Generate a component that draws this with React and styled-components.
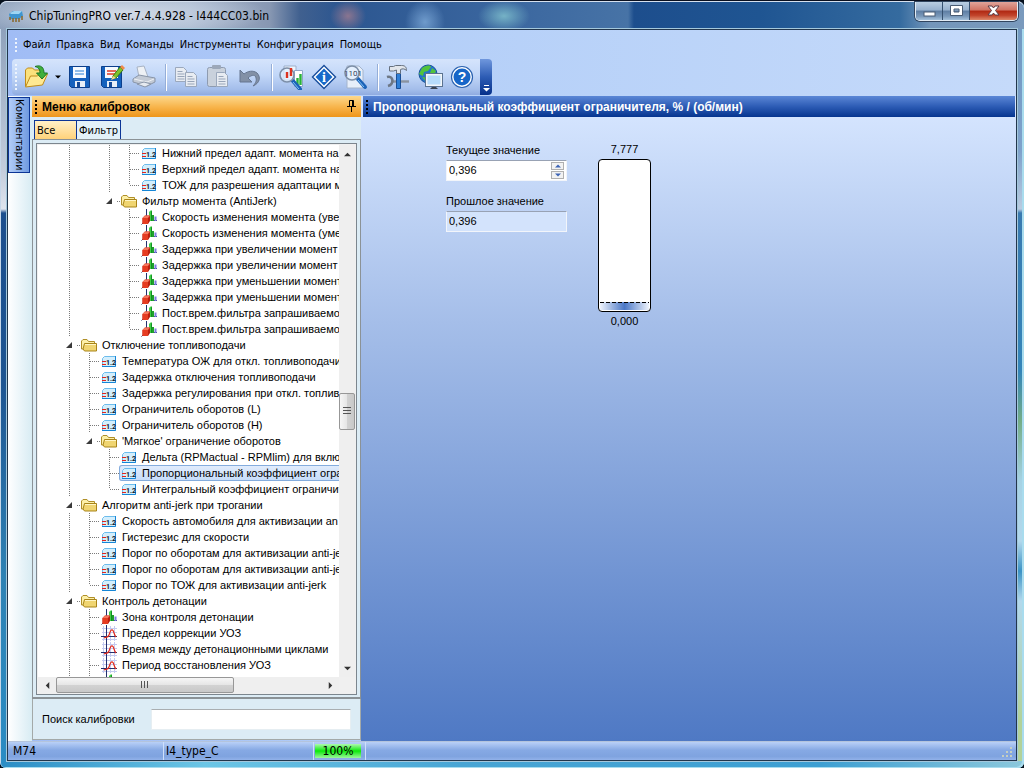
import React, { useState } from "react";
import styled, { createGlobalStyle, css } from "styled-components";

const GlobalStyle = createGlobalStyle`
  * {
    box-sizing: border-box;
  }

  body {
    margin: 0;
    background: #06101c;
    color: #000;
    font-family: "Liberation Sans", Arial, sans-serif;
    font-size: 11px;
  }

  button,
  input {
    font: inherit;
    color: inherit;
    margin: 0;
    padding: 0;
    border: 0;
    background: none;
    border-radius: 0;
  }

  input:focus {
    outline: none;
  }
`;

const tahoma = css`
  font-family: "DejaVu Sans Condensed", Tahoma, sans-serif;
`;

/* window frame */

const Window = styled.div`
  height: 100vh;
  min-height: 500px;
  display: flex;
  flex-direction: column;
  padding: 0 7px 7px;
  border-top: 1px solid #0a1020;
  border-radius: 7px 7px 6px 6px;
  box-shadow: inset 1px 1px 0 #c5d6e8, inset -2px -1px 0 #a9dcee;
  background: linear-gradient(90deg, #2a8cc4, #6cc6e6 20%, #48a5d4 45%, #3d9fd2 80%, #8cc8dc) bottom / 100% 7px no-repeat,
    linear-gradient(#8499b5, #c4cddc 170px, #dfe5ee 208px, #1d4f8e 212px, #1e5592 50%, #2f82b4 75%, #2a8cc4) left / 8px 100% no-repeat,
    linear-gradient(#6f97c0, #7fa2cb 150px, #b9cbe0 208px, #3a7ab0 212px, #3585b9 370px, #74ad87 420px, #a6d2e4 480px, #b3d8ec 540px, #3c93c5 570px, #b3d8ec 600px, #b2d29a 720px) right / 8px 100% no-repeat,
    #2b6aa5;
`;

const TitleBar = styled.header`
  display: flex;
  flex: none;
  height: 28px;
  margin: 0 -7px;
  padding: 0 6px 0 8px;
  border-radius: 7px 7px 0 0;
  border-top: 1px solid #d5e0ee;
  background: radial-gradient(ellipse 26px 16px at 504px 14px, #75b2c6, transparent),
    radial-gradient(ellipse 18px 16px at 348px 14px, #8a7590, transparent),
    radial-gradient(ellipse 20px 22px at 425px 20px, #6f9bcc, transparent),
    radial-gradient(ellipse 150px 24px at 120px 12px, #d5dde9, rgba(200, 212, 228, 0.5) 60%, transparent),
    linear-gradient(90deg, #8da0bb, #a9b8ce 190px, #8797b2 270px, #40608f 300px, #2c5690 340px, #3a669f 500px, #4773a6 628px, #1d4e8d 634px, #1f5592 760px, #356b9f 900px, #7496ba 930px, #7a9abd);
`;

const AppTitle = styled.h1`
  ${tahoma}
  flex: 1;
  margin: 0;
  display: flex;
  align-items: center;
  gap: 5px;
  font-size: 12px;
  font-weight: 400;
`;

const Caption = styled.div`
  display: flex;
  height: 19px;
  border: 1px solid #e2ebf4;
  border-top: 0;
  border-radius: 0 0 5px 5px;
  overflow: hidden;
  box-shadow: 0 0 0 1px #31455f;
`;

const CaptionButton = styled.button`
  display: grid;
  place-items: center;
  width: ${({ $close }) => ($close ? 47 : 27)}px;
  border-right: ${({ $close }) => ($close ? 0 : "1px solid #35506f")};
  background: ${({ $close }) =>
    $close
      ? "linear-gradient(#e0a49a, #cf7262 45%, #b02812 50%, #c2452c 75%, #dd8a6c)"
      : "linear-gradient(#b9cde2, #96b0cd 45%, #5d7da3 50%, #7b9abb 80%, #a4c0da)"};
`;

const Client = styled.div`
  flex: 1;
  min-height: 0;
  display: flex;
  flex-direction: column;
  border: 1px solid #22364c;
  outline: 1px solid #a4c8dc;
  background: linear-gradient(90deg, #a0bcf5, #b4cff8 40%, #c5dafa);
`;

/* menu and tool bars */

const Grip = styled.span`
  flex: none;
  width: 2px;
  height: ${({ $height }) => $height || 14}px;
  background: repeating-linear-gradient(${({ $color }) => $color || "#eef4fd"} 0 2px, transparent 2px 4px);
`;

const MenuBar = styled.nav`
  ${tahoma}
  display: flex;
  align-items: center;
  gap: 6px;
  flex: none;
  height: 29px;
  padding-left: 7px;

  button {
    white-space: nowrap;
  }
`;

const ToolRow = styled.div`
  display: flex;
  flex: none;
  height: 37px;
  padding: 0 0 1px 4px;
`;

const ToolBar = styled.div`
  display: flex;
  align-items: center;
  height: 36px;
  padding: 0 2px 0 3px;
  border-radius: 4px 0 0 4px;
  background: linear-gradient(#d5e4fc, #c2d7f8 45%, #a3bdea 85%, #8fabe0);

  ${Grip} {
    margin-right: 3px;
  }
`;

const ToolButton = styled.button`
  display: grid;
  place-items: center;
  width: ${({ $narrow }) => ($narrow ? 12 : 32)}px;
  height: 32px;
`;

const ToolDivider = styled.span`
  width: 2px;
  height: 27px;
  margin: 0 3px 0 5px;
  border-left: 1px solid #95aed8;
  border-right: 1px solid #fff;
`;

const Overflow = styled.button`
  display: flex;
  flex-direction: column;
  align-items: center;
  justify-content: flex-end;
  width: 12px;
  padding-bottom: 3px;
  border-radius: 0 4px 4px 0;
  background: linear-gradient(#6f97dd, #2d5cb4 50%, #06308a);
`;

/* work area */

const Work = styled.div`
  flex: 1;
  min-height: 0;
  display: flex;
`;

const SideRail = styled.aside`
  flex: none;
  width: 24px;
  padding-top: 1px;
  background: linear-gradient(90deg, #fff, #f3f9fc 30%, #d8ecf3);
`;

const RailTab = styled.button`
  ${tahoma}
  writing-mode: vertical-rl;
  width: 22px;
  height: 76px;
  border: 1px solid #0c3596;
  background: linear-gradient(90deg, #b3cdf7, #6f9ae0);
  text-align: left;
  padding-top: 1px;
`;

const MenuPanel = styled.section`
  flex: none;
  width: 329px;
  margin-bottom: 1px;
  display: flex;
  flex-direction: column;
  background: #dcecf5;
`;

const PanelHead = styled.div`
  display: flex;
  align-items: center;
  flex: none;
  height: 21px;
  padding: 0 5px 0 3px;
  background: ${({ $blue }) =>
    $blue ? "linear-gradient(#5b87d6, #2d5cb5 50%, #05348f)" : "linear-gradient(#fcd88d, #f8b64e 50%, #ee951a)"};
  color: ${({ $blue }) => ($blue ? "#fff" : "#000")};

  h2 {
    flex: 1;
    margin: 0 0 0 5px;
    font-size: 12px;
    font-weight: 700;
    line-height: 20px;
    white-space: nowrap;
  }
`;

const Tabs = styled.div`
  ${tahoma}
  display: flex;
  flex: none;
  height: 22px;
  padding: 3px 0 0 2px;
`;

const Tab = styled.button`
  width: ${({ $active }) => ($active ? 42 : 45)}px;
  padding-left: 2px;
  border: 1px solid #0c3596;
  border-right-width: ${({ $active }) => ($active ? 0 : 1)}px;
  border-bottom: 0;
  background: ${({ $active }) => ($active ? "linear-gradient(#fff0c8, #ffd27a)" : "#e3f1f8")};
  text-align: left;
`;

const TabPage = styled.div`
  flex: 1;
  min-height: 0;
  display: flex;
  border: 1px solid #8b9296;
  border-bottom-width: 2px;
  padding: 3px 3px 2px;
`;

const TreeBox = styled.div`
  flex: 1;
  min-width: 0;
  display: grid;
  grid-template-columns: minmax(0, 1fr) 16px;
  grid-template-rows: minmax(0, 1fr) 16px;
  padding: 1px;
  border: 1px solid #7c868e;
  background: #f0f0f0;
`;

const Tree = styled.ul`
  margin: 0;
  padding: 0 0 0 22px;
  list-style: none;
  background: #fff;
  overflow: hidden;
`;

const Row = styled.li`
  display: flex;
  height: 16px;
  line-height: 16px;
  white-space: nowrap;
`;

const Label = styled.span`
  flex: ${({ $selected }) => ($selected ? "1" : "none")};
  display: flex;
  ${({ $selected }) =>
    $selected &&
    css`
      margin-left: -1px;
      border-radius: 3px 0 0 3px;
      background: linear-gradient(#e3edfc, #c5dcfa);
      box-shadow: inset 0 0 0 1px #84acdd;

      svg {
        margin-left: 1px;
      }
    `}

  svg {
    flex: none;
    margin-right: 2px;
  }
`;

const Cell = styled.span`
  flex: none;
  display: flex;
  width: 20px;
  height: 16px;
`;

const ScrollBar = styled.div`
  display: flex;
  flex-direction: ${({ $vertical }) => ($vertical ? "column" : "row")};
  background: #efefef;

  button {
    display: grid;
    place-items: center;
    width: ${({ $vertical }) => ($vertical ? 16 : 18)}px;
    height: ${({ $vertical }) => ($vertical ? 18 : 16)}px;
  }
`;

const Track = styled.div`
  flex: ${({ $grow }) => $grow} 1 0;
`;

const Thumb = styled.div`
  flex: ${({ $grow }) => $grow} 1 0;
  display: grid;
  place-items: center;
  border: 1px solid #979797;
  border-radius: 2px;
  background: linear-gradient(${({ $vertical }) => ($vertical ? "90deg" : "180deg")}, #f6f6f6, #e6e6e6 48%, #d2d2d2 52%, #c8c8c8);
`;

const Search = styled.div`
  display: flex;
  align-items: center;
  flex: none;
  height: 41px;
  padding: 0 9px;
  border: 1px solid #a3a9a8;
  border-top: 0;

  label {
    width: 109px;
  }

  input {
    flex: 1;
    min-width: 0;
    height: 21px;
    border: 1px solid #e6eef2;
    border-top-color: #a9aeb1;
    background: #fff;
  }
`;

const Main = styled.main`
  flex: 1;
  min-width: 0;
  margin-right: 1px;
  display: flex;
  flex-direction: column;
`;

const WorkBack = styled.div`
  flex: 1;
  min-width: 0;
  display: flex;
  padding-left: 2px;
  background: linear-gradient(#d4e4fe 20px, #a5bee9 35%, #4f79c4);
`;

const Editor = styled.div`
  display: flex;
  gap: 31px;
  padding: 23px 0 0 83px;
`;

const Fields = styled.div`
  width: 121px;
  display: flex;
  flex-direction: column;
`;

const FieldLabel = styled.label`
  line-height: 20px;
`;

const FieldBox = styled.div`
  display: flex;
  height: 21px;
  margin-bottom: 10px;
  padding: 1px 2px 0;
  border: 1px solid #f2f5fa;
  border-top-color: #98a2b4;
  background: ${({ $readOnly }) => ($readOnly ? "#d3e3fc" : "#fff")};

  input {
    flex: 1;
    min-width: 0;
    height: 16px;
  }
`;

const Spinner = styled.span`
  flex: none;
  display: flex;
  flex-direction: column;
  gap: 1px;

  button {
    display: grid;
    place-items: center;
    width: 13px;
    height: 8px;
    border: 1px solid #b0b0b0;
    background: #f2f2f2;
  }
`;

const Gauge = styled.div`
  width: 53px;
  display: flex;
  flex-direction: column;
  line-height: 19px;
  text-align: center;
`;

const GaugeBox = styled.div`
  height: 153px;
  display: flex;
  flex-direction: column;
  justify-content: flex-end;
  padding: 1px;
  border: 1px solid #000;
  border-radius: 4px;
  background: #fff;
`;

const GaugeFill = styled.div`
  background: repeating-linear-gradient(90deg, #000 0 4px, transparent 4px 6px) top / 100% 1px no-repeat,
    linear-gradient(90deg, #eef3fc, #4a77c6 50%, #eef3fc);
`;

/* status bar */

const StatusBar = styled.footer`
  ${tahoma}
  display: flex;
  align-items: center;
  flex: none;
  height: 19px;
  border-top: 1px solid #b4c4dc;
  background: linear-gradient(#b9d0f7, #86a9e4 45%, #7fa3df 80%, #92b2ea);
  font-size: 12px;
`;

const StatusCell = styled.div`
  flex: none;
  width: ${({ $width }) => $width}px;
  height: 18px;
  line-height: 19px;
  padding-left: ${({ $pad }) => $pad}px;
  border-right: 1px solid #cfe0fb;
`;

const Progress = styled.div`
  flex: none;
  width: 46px;
  height: 14px;
  margin: 0 4px 0 1px;
  line-height: 14px;
  text-align: center;
  background: linear-gradient(#aefaae, #0be80b 50%, #9df79d);
`;

const StatusFill = styled.div`
  flex: 1;
  height: 18px;
  display: flex;
  justify-content: flex-end;
  align-items: flex-end;
  padding: 0 3px 2px 0;
  border-left: 1px solid #cfe0fb;
`;

/* icons */

const ChipIcon = () => (
  <svg width="16" height="16" viewBox="0 0 16 16">
    <path d="M1 6l4-3h9l1 5-4 3H2z" fill="#3f95cf" />
    <path d="M2 5l4-2h8l-3 3H3z" fill="#9fd5f2" />
    <path d="M2 9v3M5 10v4M8 10v4M11 10v4M14 8v4" stroke="#8a6c34" strokeWidth="1.6" />
  </svg>
);

const OpenIcon = () => (
  <svg width="26" height="26" viewBox="0 0 26 26">
    <path d="M2.500 22V6l2-2h5l2 2h7v5" fill="#fbe17c" stroke="#c08c1a" />
    <path d="M2.500 23l5-11h7l2-2h8l-5 11z" fill="#ffe992" stroke="#c08c1a" />
    <path d="M12 2.500c6-2 9 1 9 6.500h3.500L19 15l-5.500-6H17c0-3-1-5.500-5-6.500z" fill="#3faf3c" stroke="#1b7624" />
  </svg>
);

const SaveIcon = ({ edit }) => (
  <svg width="26" height="26" viewBox="0 0 26 26">
    <path d="M2.500 2.500h20v21h-18l-2-2z" fill="#1561bd" stroke="#0c3f8c" />
    <rect x="6" y="3" width="13" height="11" fill="#f6faff" />
    <path d="M8 7h9M8 10h9" stroke={edit ? "#e03a24" : "#6fa9e4"} strokeWidth="1.500" />
    <rect x="8" y="17" width="10" height="6" fill="#e8eef7" />
    <rect x="10" y="18" width="3" height="5" fill="#154a98" />
    {edit && (
      <>
        <path d="M14 12l7-9 3 3-7 8-4 1z" fill="#7ec32c" stroke="#3c7a12" />
        <path d="M21 3l2-2 3 3-2 2z" fill="#f08a4a" />
        <path d="M14 12l-2 4 5-2z" fill="#f7d58e" />
      </>
    )}
  </svg>
);

const PrintIcon = () => (
  <svg width="26" height="26" viewBox="0 0 26 26">
    <path d="M8 13L6 3l7-1 4 11z" fill="#eef1f5" stroke="#a8b3c4" />
    <path d="M2 15l6-4 16 3v4l-8 4-14-4z" fill="#c3cad5" stroke="#8995a8" />
    <path d="M3 15l13 3 7-3" fill="none" stroke="#eef1f5" />
    <path d="M6 20l8 3 6-3-7-2z" fill="#e6eaf0" stroke="#8995a8" />
  </svg>
);

const Page = ({ x, y }) => (
  <g transform={`translate(${x} ${y})`}>
    <path d="M0 0h8l3 3v11H0z" fill="#e8ecf2" stroke="#9ba8bc" />
    <path d="M2 4h5M2 6.500h7M2 9h7M2 11.500h7" stroke="#98a5b9" />
  </g>
);

const CopyIcon = () => (
  <svg width="26" height="26" viewBox="0 0 26 26">
    <Page x={2.5} y={3.5} />
    <Page x={12.5} y={8.5} />
  </svg>
);

const PasteIcon = () => (
  <svg width="26" height="26" viewBox="0 0 26 26">
    <rect x="2.500" y="3.500" width="18" height="19" rx="2" fill="#c9d1dc" stroke="#8e9bb0" />
    <rect x="7" y="1" width="9" height="4" rx="1" fill="#9ca8ba" />
    <Page x={11.5} y={8.5} />
  </svg>
);

const UndoIcon = () => (
  <svg width="26" height="26" viewBox="0 0 26 26">
    <path d="M3 6v12h12l-4-4c4-4 8-3 8 0 1 3-1 6-3 8 7-3 8-9 4-13-4-3-9-2-13 1z" fill="#8290a6" stroke="#65758f" />
  </svg>
);

const Lens = ({ x, y }) => (
  <g transform={`translate(${x} ${y})`}>
    <path d="M6 6l7 8" stroke="#1b62b8" strokeWidth="4" strokeLinecap="round" />
    <path d="M6 7l6 7" stroke="#7fc0f4" />
    <circle r="7" fill="#e3f1ff" fillOpacity="0.7" stroke="#7d8fa8" strokeWidth="1.600" />
  </g>
);

const ChartLensIcon = () => (
  <svg width="26" height="26" viewBox="0 0 26 26">
    <path d="M5 2h12v14H5z" fill="#eef4fc" stroke="#9db0cc" />
    <path d="M15.500 6.500h8v16h-8z" fill="#fff" stroke="#8ea6c8" />
    <path d="M18.500 21v-7M21.500 21V10" stroke="#27b238" strokeWidth="2.400" />
    <Lens x={8} y={11} />
    <path d="M8 14V8M12 12V4" stroke="#dc3320" strokeWidth="2.400" />
  </svg>
);

const InfoIcon = () => (
  <svg width="26" height="26" viewBox="0 0 26 26">
    <path d="M13 1.500L24.500 13 13 24.500 1.500 13z" fill="#fff" stroke="#174d9c" strokeWidth="1.400" />
    <path d="M13 4.500l8.500 8.500-8.500 8.500L4.500 13z" fill="#1769c9" />
    <text x="13" y="18" fontSize="14" fontWeight="700" fontFamily="Liberation Serif, serif" textAnchor="middle" fill="#fff">
      i
    </text>
  </svg>
);

const BinaryIcon = () => (
  <svg width="26" height="26" viewBox="0 0 26 26">
    <path d="M4 2h12l4 4v18H4z" fill="#e7effa" stroke="#a4b4cc" />
    <Lens x={9} y={9} />
    <text x="10" y="12" fontSize="8" fontFamily="Roboto, sans-serif" textAnchor="middle" fill="#34445c">
      1101
    </text>
  </svg>
);

const ToolsIcon = () => (
  <svg width="26" height="26" viewBox="0 0 26 26">
    <path d="M6 17.500h18" stroke="#8a93a0" strokeWidth="2.400" />
    <path d="M2 13c6-2 8 7 1 9" fill="none" stroke="#6d7785" strokeWidth="2.600" />
    <path d="M11.500 9.500h4v15h-4z" fill="#2f7fd6" stroke="#1a4f95" />
    <path d="M4.500 2.500h4l2-1h6c4 0 5 2 5 5-2-2-4-2-6-1v4h-4V6l-3 1h-4z" fill="#e2e6eb" stroke="#66707e" />
  </svg>
);

const NetIcon = () => (
  <svg width="26" height="26" viewBox="0 0 26 26">
    <circle cx="11" cy="10" r="9" fill="#2474cc" stroke="#195299" />
    <path d="M5 4c5-3 8-3 9-1l-3 4-4 1-1 4-4-2zM15 4l4 3-2 4-4-2zM5 13l6 1-2 4z" fill="#52c33c" />
    <rect x="9.500" y="10.500" width="15" height="11" fill="#b7dcfb" stroke="#f2f6fa" strokeWidth="2" />
    <rect x="8.500" y="9.500" width="17" height="13" fill="none" stroke="#5b7391" />
    <path d="M15 23h4l2 2h-8z" fill="#3c4654" />
  </svg>
);

const HelpIcon = () => (
  <svg width="26" height="26" viewBox="0 0 26 26">
    <circle cx="13" cy="13" r="10.500" fill="#fff" stroke="#2a62b0" strokeWidth="1.200" />
    <circle cx="13" cy="13" r="8.500" fill="#1766c8" />
    <text x="13" y="18" fontSize="14" fontWeight="700" fontFamily="Liberation Sans, sans-serif" textAnchor="middle" fill="#fff">
      ?
    </text>
  </svg>
);

const PinIcon = () => (
  <svg width="9" height="13" viewBox="0 0 9 13">
    <path d="M2.500 7V1.500h4V7M0 7.500h9M4.500 8v5M5.500 2v5" fill="none" stroke="#000" />
  </svg>
);

const Arrow = ({ dir, color = "#333", width = 7 }) => {
  const angle = { up: 180, down: 0, left: 90, right: -90 }[dir];
  return (
    <svg width={width} height={width} viewBox="0 0 8 8">
      <path d="M0 2h8L4 6z" fill={color} transform={`rotate(${angle} 4 4)`} />
    </svg>
  );
};

const NumberIcon = () => (
  <svg width="20" height="16" viewBox="0 0 20 16">
    <path d="M4.500 3.500h11v10h-13v-8z" fill="#d3eefc" stroke="#6cbcec" />
    <path d="M15.500 3v10.500H2" fill="none" stroke="#1686d6" />
    <path d="M2 8.500h4M2 11.500h4" stroke="#e3231c" />
    <text x="6" y="12" fontSize="7" fontWeight="700" fontFamily="Roboto, sans-serif" fill="#0c1c2c">
      1.2
    </text>
  </svg>
);

const BarsIcon = () => (
  <svg width="20" height="16" viewBox="0 0 20 16">
    <path d="M6.500 0v10M6 11L1.500 15.500M6 11.500h11" fill="none" stroke="#23306e" />
    <path d="M9 3l1.500-1.500H12V12H9z" fill="#3fd048" />
    <path d="M11 2.500l1-1V12h-1z" fill="#138f22" />
    <path d="M12 6h2v6h-2z" fill="#1fa12c" />
    <path d="M14.500 7.500h2V12h-2z" fill="#7d7ce0" />
    <path d="M2.500 9L5 6.500h5V12l-2 3H2.500z" fill="#b8200e" />
    <path d="M2.500 9H8v6H2.500z" fill="#e63c22" />
    <path d="M2.500 9L5 6.500h5L8 9z" fill="#f4765c" />
  </svg>
);

const CurveIcon = () => (
  <svg width="20" height="16" viewBox="0 0 20 16">
    <path d="M2 3.500h15M2 7.500h15M2 14.500h15M3.500 1v15M10.500 1v15M14.500 1v15" stroke="#c4caf0" />
    <path d="M6.500 0v16M1 11.500h16" stroke="#23306e" />
    <path d="M4 13c2-1 4 0 5-3s2-6 3.500-5 1.500 5 3.500 7" fill="none" stroke="#e22a1c" strokeWidth="1.200" />
  </svg>
);

const FolderIcon = () => (
  <svg width="20" height="16" viewBox="0 0 20 16">
    <path d="M1.500 12V4L3 2.500h4L8.500 4.500h6V12z" fill="#fdf0a8" stroke="#b08f28" />
    <path d="M4.500 6.500h12v7.500h-12L3 12z" fill="#f0d571" stroke="#a98418" />
    <path d="M5 7.500h11" stroke="#fff6c4" />
  </svg>
);

const icons = { number: NumberIcon, bars: BarsIcon, curve: CurveIcon, folder: FolderIcon };

// "|" guide, "+" branch, "L" last branch, "v" expander, "." empty
const Guide = ({ kind }) => (
  <Cell>
    <svg width="20" height="16" viewBox="0 0 20 16">
      <g stroke="#7a7a7a" strokeDasharray="1 1">
        {(kind === "|" || kind === "+") && <path d="M9.500 0v16" />}
        {kind === "L" && <path d="M9.500 0v8" />}
        {(kind === "+" || kind === "L") && <path d="M10 8.500h10" />}
        {kind === "v" && <path d="M17 8.500h3" />}
      </g>
      {kind === "v" && <path d="M12 5v6H6z" fill="#3a3a3a" />}
    </svg>
  </Cell>
);

const rows = [
  ["|.|+", "number", "Нижний предел адапт. момента на"],
  ["|.|+", "number", "Верхний предел адапт. момента на"],
  ["|.|L", "number", "ТОЖ для разрешения адаптации м"],
  ["|.v", "folder", "Фильтр момента (AntiJerk)"],
  ["|..+", "bars", "Скорость изменения момента (уве"],
  ["|..+", "bars", "Скорость изменения момента (уме"],
  ["|..+", "bars", "Задержка при увеличении момент"],
  ["|..+", "bars", "Задержка при увеличении момент"],
  ["|..+", "bars", "Задержка при уменьшении момент"],
  ["|..+", "bars", "Задержка при уменьшении момент"],
  ["|..+", "bars", "Пост.врем.фильтра запрашиваемо"],
  ["|..L", "bars", "Пост.врем.фильтра запрашиваемо"],
  ["v", "folder", "Отключение топливоподачи"],
  ["|+", "number", "Температура ОЖ для откл. топливоподачи"],
  ["|+", "number", "Задержка отключения топливоподачи"],
  ["|+", "number", "Задержка регулирования при откл. топлив"],
  ["|+", "number", "Ограничитель оборотов (L)"],
  ["|+", "number", "Ограничитель оборотов (H)"],
  ["|v", "folder", "'Мягкое' ограничение оборотов"],
  ["|.+", "number", "Дельта (RPMactual - RPMlim) для вклю"],
  ["|.+", "number", "Пропорциональный коэффициент огра"],
  ["|.L", "number", "Интегральный коэффициент ограничит"],
  ["v", "folder", "Алгоритм anti-jerk при трогании"],
  ["|+", "number", "Скорость автомобиля для активизации an"],
  ["|+", "number", "Гистерезис для скорости"],
  ["|+", "number", "Порог по оборотам для активизации anti-je"],
  ["|+", "number", "Порог по оборотам для активизации anti-je"],
  ["|L", "number", "Порог по ТОЖ для активизации anti-jerk"],
  ["v", "folder", "Контроль детонации"],
  ["|+", "bars", "Зона контроля детонации"],
  ["|+", "curve", "Предел коррекции УОЗ"],
  ["|+", "curve", "Время между детонационными циклами"],
  ["|+", "curve", "Период восстановления УОЗ"],
  ["|+", "bars", ""],
];

const TreeRow = ({ guides, icon, text, selected, onSelect }) => {
  const Icon = icons[icon];
  return (
    <Row onClick={onSelect}>
      {guides.split("").map((kind, i) => (
        <Guide key={i} kind={kind} />
      ))}
      <Label $selected={selected}>
        <Icon />
        {text}
      </Label>
    </Row>
  );
};

const tools = [
  ["Сохранить", <SaveIcon />],
  ["Сохранить как", <SaveIcon edit />],
  ["Печать", <PrintIcon />],
  null,
  ["Копировать", <CopyIcon />],
  ["Вставить", <PasteIcon />],
  ["Отменить", <UndoIcon />],
  null,
  ["Анализ", <ChartLensIcon />],
  ["Информация", <InfoIcon />],
  ["Просмотр кода", <BinaryIcon />],
  null,
  ["Настройки", <ToolsIcon />],
  ["Обновление", <NetIcon />],
  ["Справка", <HelpIcon />],
];

const menu = ["Файл", "Правка", "Вид", "Команды", "Инструменты", "Конфигурация", "Помощь"];

const App = () => {
  const [selected, setSelected] = useState(20);
  const [value, setValue] = useState("0,396");
  const [query, setQuery] = useState("");

  const step = (delta) =>
    setValue((v) => (parseFloat(v.replace(",", ".")) + delta).toFixed(3).replace(".", ","));

  return (
    <>
      <GlobalStyle />
      <Window>
        <TitleBar>
          <AppTitle>
            <ChipIcon />
            ChipTuningPRO ver.7.4.4.928 - I444CC03.bin
          </AppTitle>
          <Caption>
            <CaptionButton aria-label="Свернуть">
              <svg width="13" height="12" viewBox="0 0 13 12">
                <rect x="1" y="7" width="11" height="4" fill="#fff" stroke="#4a5c74" />
              </svg>
            </CaptionButton>
            <CaptionButton aria-label="Развернуть">
              <svg width="13" height="12" viewBox="0 0 13 12">
                <path d="M.5 .5h12v10H.5zM4 4h5v3H4z" fill="#fff" fillRule="evenodd" stroke="#4a5c74" />
              </svg>
            </CaptionButton>
            <CaptionButton $close aria-label="Закрыть">
              <svg width="13" height="12" viewBox="0 0 13 12">
                <path d="M1 1h4l1.500 2L8 1h4L8.500 5.500 12 10H8L6.500 8 5 10H1l3.500-4.500z" fill="#fff" stroke="#5c3a44" />
              </svg>
            </CaptionButton>
          </Caption>
        </TitleBar>
        <Client>
          <MenuBar>
            <Grip />
            {menu.map((item) => (
              <button key={item}>{item}</button>
            ))}
          </MenuBar>
          <ToolRow>
            <ToolBar>
              <Grip $height={26} />
              <ToolButton aria-label="Открыть">
                <OpenIcon />
              </ToolButton>
              <ToolButton $narrow aria-label="Недавние файлы">
                <Arrow dir="down" color="#000" width={6} />
              </ToolButton>
              {tools.map((tool, i) =>
                tool ? (
                  <ToolButton key={tool[0]} aria-label={tool[0]}>
                    {tool[1]}
                  </ToolButton>
                ) : (
                  <ToolDivider key={i} />
                )
              )}
            </ToolBar>
            <Overflow aria-label="Параметры панели">
              <svg width="7" height="7" viewBox="0 0 7 7">
                <path d="M1 0h5v1H1zM0 3h7L3.500 6.500z" fill="#fff" />
              </svg>
            </Overflow>
          </ToolRow>
          <Work>
            <SideRail>
              <RailTab>Комментарии</RailTab>
            </SideRail>
            <MenuPanel>
              <PanelHead>
                <Grip $color="#000" />
                <h2>Меню калибровок</h2>
                <button aria-label="Закрепить">
                  <PinIcon />
                </button>
              </PanelHead>
              <Tabs>
                <Tab $active>Все</Tab>
                <Tab>Фильтр</Tab>
              </Tabs>
              <TabPage>
                <TreeBox>
                  <Tree>
                    {rows.map(([guides, icon, text], i) => (
                      <TreeRow
                        key={i}
                        guides={guides}
                        icon={icon}
                        text={text}
                        selected={i === selected}
                        onSelect={() => setSelected(i)}
                      />
                    ))}
                  </Tree>
                  <ScrollBar $vertical>
                    <button aria-label="Вверх">
                      <Arrow dir="up" />
                    </button>
                    <Track $grow={231} />
                    <Thumb $vertical $grow={35}>
                      <svg width="8" height="8" viewBox="0 0 8 8">
                        <path d="M0 .5h8M0 3.500h8M0 6.500h8" stroke="#555" />
                      </svg>
                    </Thumb>
                    <Track $grow={230} />
                    <button aria-label="Вниз">
                      <Arrow dir="down" />
                    </button>
                  </ScrollBar>
                  <ScrollBar>
                    <button aria-label="Влево">
                      <Arrow dir="left" />
                    </button>
                    <Thumb $grow={177}>
                      <svg width="8" height="8" viewBox="0 0 8 8">
                        <path d="M.5 0v7M3.500 0v7M6.500 0v7" stroke="#555" />
                      </svg>
                    </Thumb>
                    <Track $grow={88} />
                    <button aria-label="Вправо">
                      <Arrow dir="right" />
                    </button>
                  </ScrollBar>
                </TreeBox>
              </TabPage>
              <Search>
                <label htmlFor="query">Поиск калибровки</label>
                <input id="query" value={query} onChange={(e) => setQuery(e.target.value)} />
              </Search>
            </MenuPanel>
            <WorkBack>
              <Main>
                <PanelHead $blue>
                  <Grip $color="#000" />
                  <h2>Пропорциональный коэффициент ограничителя, % / (об/мин)</h2>
                </PanelHead>
                <Editor>
                  <Fields>
                    <FieldLabel htmlFor="current">Текущее значение</FieldLabel>
                    <FieldBox>
                      <input id="current" value={value} onChange={(e) => setValue(e.target.value)} />
                      <Spinner>
                        <button aria-label="Увеличить" onClick={() => step(0.001)}>
                          <Arrow dir="up" color="#3c63b4" width={6} />
                        </button>
                        <button aria-label="Уменьшить" onClick={() => step(-0.001)}>
                          <Arrow dir="down" color="#3c63b4" width={6} />
                        </button>
                      </Spinner>
                    </FieldBox>
                    <FieldLabel htmlFor="previous">Прошлое значение</FieldLabel>
                    <FieldBox $readOnly>
                      <input id="previous" value="0,396" readOnly />
                    </FieldBox>
                  </Fields>
                  <Gauge>
                    <span>7,777</span>
                    <GaugeBox>
                      <GaugeFill style={{ height: `${(parseFloat(value.replace(",", ".")) / 7.777) * 100 || 0}%` }} />
                    </GaugeBox>
                    <span>0,000</span>
                  </Gauge>
                </Editor>
              </Main>
            </WorkBack>
          </Work>
          <StatusBar>
            <StatusCell $width={156} $pad={5}>
              M74
            </StatusCell>
            <StatusCell $width={150} $pad={2}>
              I4_type_C
            </StatusCell>
            <Progress>100%</Progress>
            <StatusFill>
              <svg width="12" height="12" viewBox="0 0 12 12">
                <path d="M9 1h2v2H9zM9 5h2v2H9zM5 5h2v2H5zM9 9h2v2H9zM5 9h2v2H5zM1 9h2v2H1z" fill="#c6cfc0" />
              </svg>
            </StatusFill>
          </StatusBar>
        </Client>
      </Window>
    </>
  );
};

export default App;
